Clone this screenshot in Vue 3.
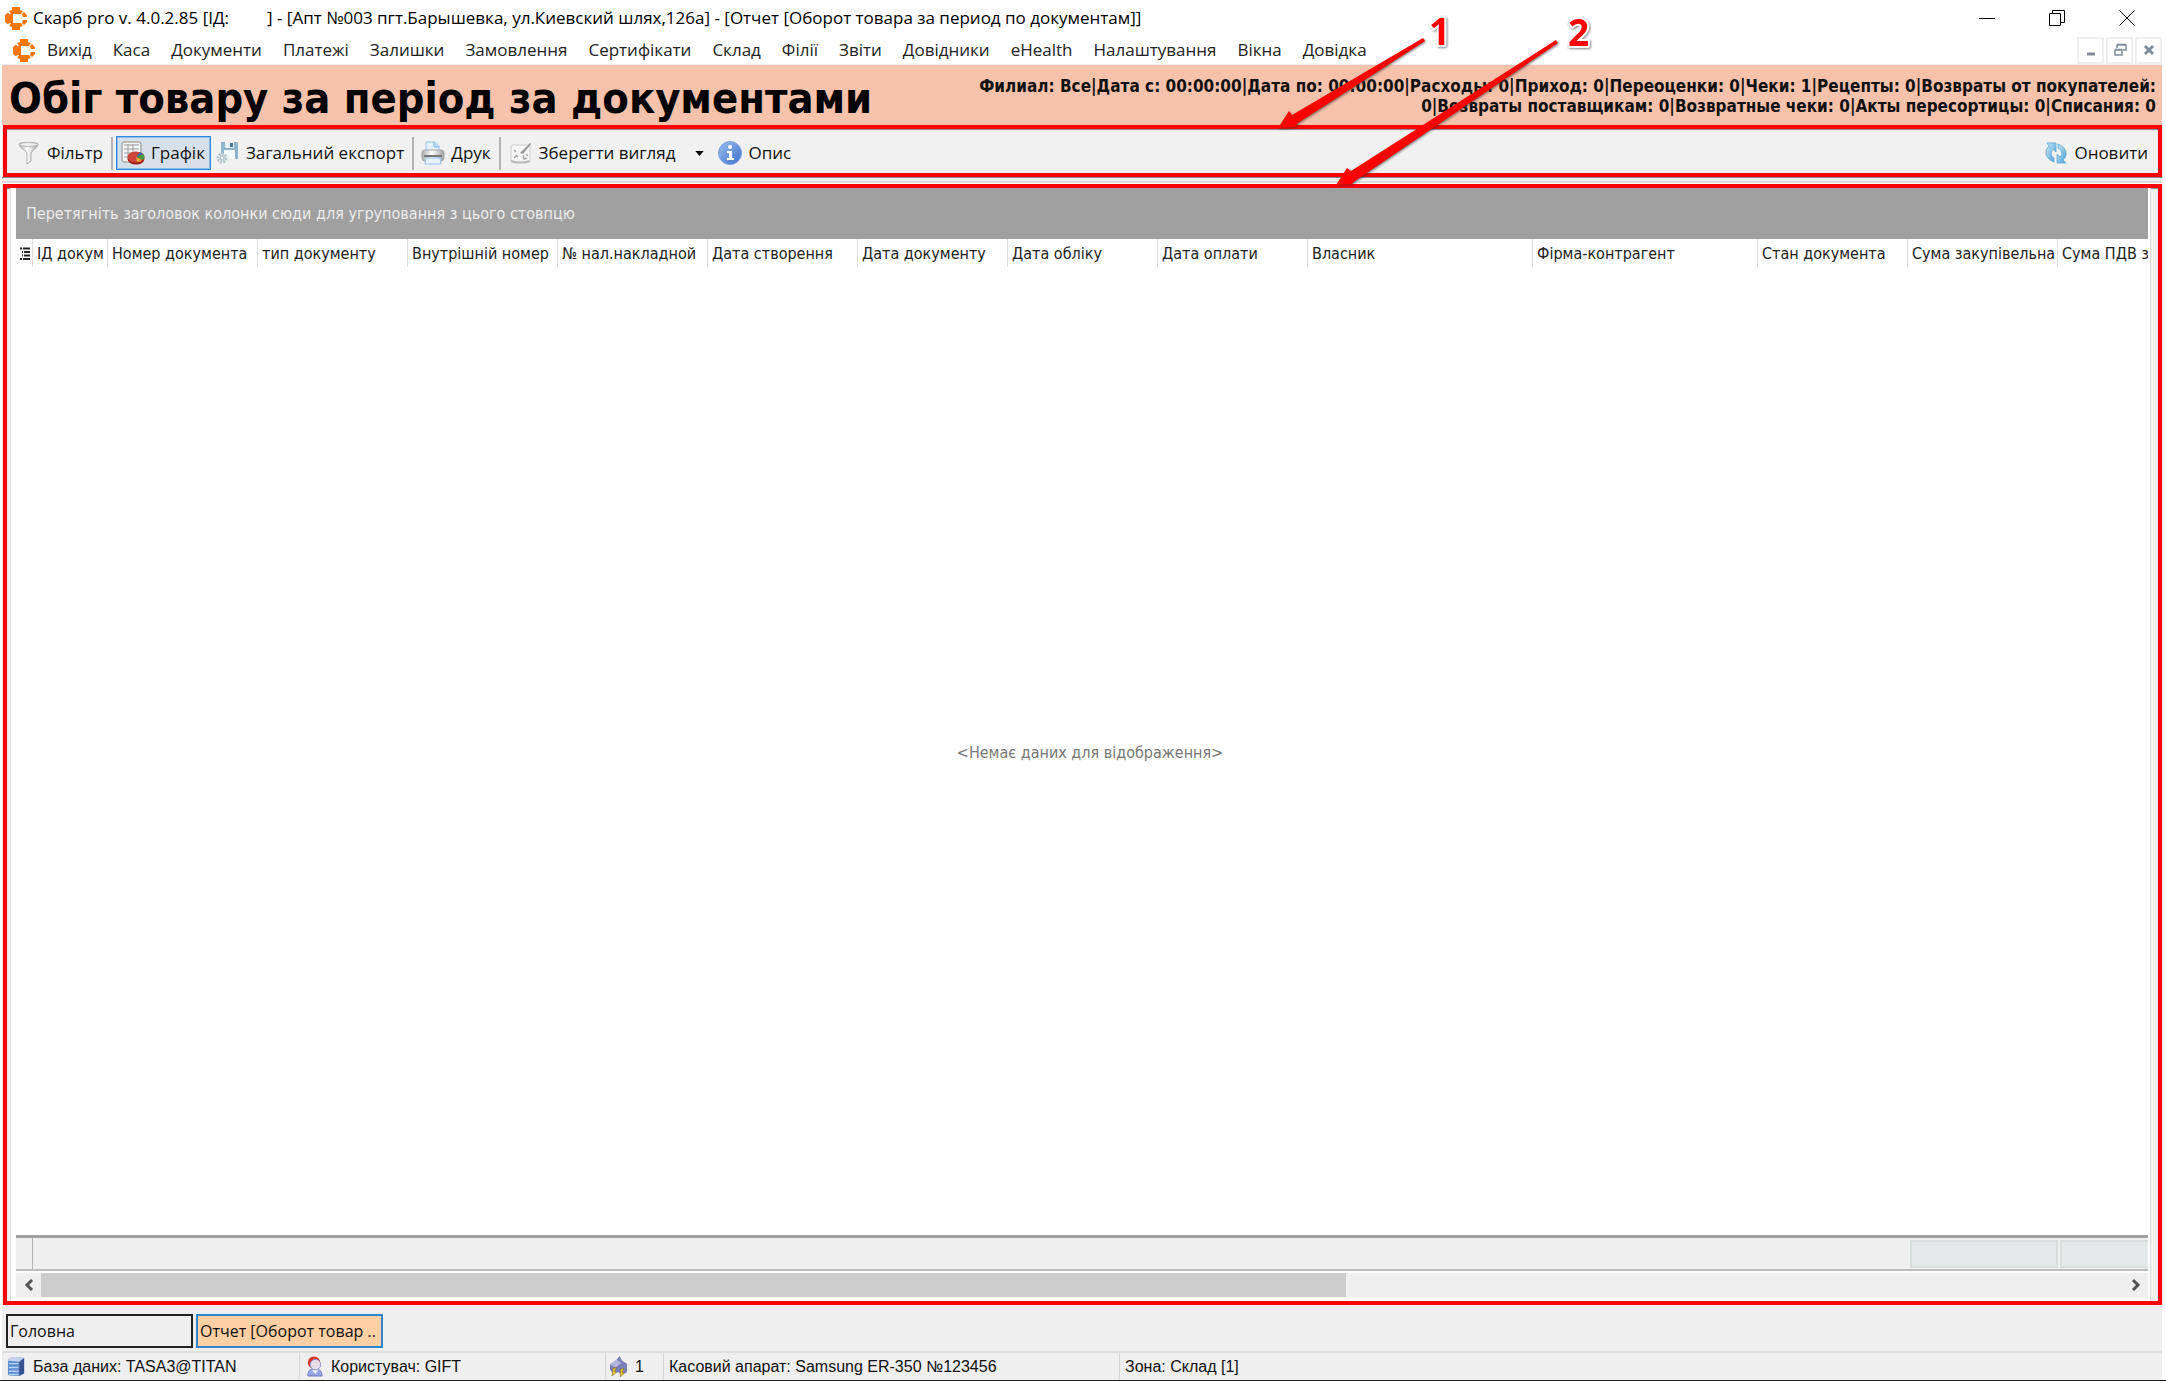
<script setup>
const menu = ['Вихід', 'Каса', 'Документи', 'Платежі', 'Залишки', 'Замовлення', 'Сертифікати', 'Склад', 'Філії', 'Звіти', 'Довідники', 'eHealth', 'Налаштування', 'Вікна', 'Довідка']
const columns = [
  { label: 'ІД докум', width: 75 },
  { label: 'Номер документа', width: 150 },
  { label: 'тип документу', width: 150 },
  { label: 'Внутрішній номер', width: 150 },
  { label: '№ нал.накладной', width: 150 },
  { label: 'Дата створення', width: 150 },
  { label: 'Дата документу', width: 150 },
  { label: 'Дата обліку', width: 150 },
  { label: 'Дата оплати', width: 150 },
  { label: 'Власник', width: 225 },
  { label: 'Фірма-контрагент', width: 225 },
  { label: 'Стан документа', width: 150 },
  { label: 'Сума закупівельна', width: 150, total: true },
  { label: 'Сума ПДВ з', total: true },
]
const summary = 'Филиал: Все|Дата с: 00:00:00|Дата по: 00:00:00|Расходы: 0|Приход: 0|Переоценки: 0|Чеки: 1|Рецепты: 0|Возвраты от покупателей: 0|Возвраты поставщикам: 0|Возвратные чеки: 0|Акты пересортицы: 0|Списания: 0'
const visibleShare = 62.7
</script>

<template>
  <div class="app">
    <svg class="defs" aria-hidden="true">
      <defs>
        <symbol id="logo" viewBox="0 0 22 25">
          <path d="M7 1h8v3l3 1-2 3H6L4 5l3-1zM7 24h8v-3l3-1-2-3H6l-2 3 3 1z" fill="#ff7800" />
          <path d="M3 6.500 5.500 9v7L3 18.500 0 16V9zM19 6l3 3v2h-4l-1-3zM19 19l3-3v-2h-4l-1 3z" fill="#ff7800" />
          <path d="M4 8h4v9H4z" fill="#ff7800" />
        </symbol>
        <linearGradient id="steel" x1="0" x2="1"><stop offset="0" stop-color="#a9adb0" /><stop offset=".45" stop-color="#fff" /><stop offset="1" stop-color="#a0a3a6" /></linearGradient>
        <linearGradient id="blue" x1="0" x2="1" y2="1"><stop offset="0" stop-color="#9cc0f3" /><stop offset="1" stop-color="#3d6fc9" /></linearGradient>
        <linearGradient id="sky" x1="0" x2="1" y2="1"><stop offset="0" stop-color="#c4e6f8" /><stop offset="1" stop-color="#4ba3d6" /></linearGradient>
        <filter id="drop" x="-10%" y="-10%" width="120%" height="120%" color-interpolation-filters="sRGB"><feDropShadow dx="1" dy="1" stdDeviation="1" flood-color="#333" flood-opacity=".6" /></filter>
      </defs>
    </svg>

    <header class="titlebar">
      <svg class="logo"><use href="#logo" /></svg>
      <span class="apptitle">Скарб pro v. 4.0.2.85 [ІД:</span>
      <span>] - [Апт №003 пгт.Барышевка, ул.Киевский шлях,126а] - [Отчет [Оборот товара за период по документам]]</span>
      <div class="wincontrols">
        <button aria-label="Згорнути"><svg viewBox="0 0 16 16"><path d="M0 8.500h16" /></svg></button>
        <button aria-label="Відновити"><svg viewBox="0 0 16 16"><path d="M.5 3.500h11v12H.5zM3.500 3.500v-3h12v12h-4" /></svg></button>
        <button aria-label="Закрити"><svg viewBox="0 0 16 16"><path d="m.5.5 15 15m0-15-15 15" /></svg></button>
      </div>
    </header>

    <nav class="menubar">
      <svg class="logo"><use href="#logo" /></svg>
      <a v-for="m in menu" :key="m" href="#">{{ m }}</a>
      <div class="mdi">
        <button aria-label="Згорнути вікно"><svg viewBox="0 0 14 14"><path d="M3 11h8" stroke-width="3" /></svg></button>
        <button aria-label="Відновити вікно"><svg viewBox="0 0 14 14"><path d="M4 5V2h9v5h-3M4 1.500h9M2 7h7v5H2zM2 6.500h7" stroke-width="1.500" /></svg></button>
        <button aria-label="Закрити вікно"><svg viewBox="0 0 14 14"><path d="m3 3 8 8m0-8-8 8" stroke-width="3" /></svg></button>
      </div>
    </nav>

    <section class="banner">
      <h1>Обіг товару за період за документами</h1>
      <p>{{ summary }}</p>
    </section>

    <div class="toolbar marked">
      <button class="filter">
        <svg viewBox="0 0 24 24"><path d="M2 3c0-2 19-2 19 0 0 3-6 7-7 9v8l-4 3V12C8 9 2 6 2 3z" fill="url(#steel)" stroke="#aaa" /><ellipse cx="11.500" cy="3.500" rx="9" ry="2" fill="#eee" stroke="#b5b5b5" /></svg>
        Фільтр
      </button>
      <i class="sep"></i>
      <button class="chart active">
        <svg viewBox="0 0 24 24"><rect x="1" y="1" width="19" height="20" rx="2" fill="#f4f4f4" stroke="#8c8c8c" /><path d="M3 4h15M3 8h15M3 12h15M3 16h8M7 3v15M12 3v12" stroke="#9d9d9d" /><ellipse cx="15" cy="18" rx="8.500" ry="5.500" fill="#9c1f19" /><ellipse cx="15" cy="16" rx="8.500" ry="5.500" fill="#d1443b" /><path d="m15 16 7-3c2 2 2 4 0 6z" fill="#4a9b3c" /><path d="m15 16 6 3c-2 2-4 2-5 2z" fill="#e9a02c" /><path d="m15 16 4-5 3 2z" fill="#3d6dad" /></svg>
        Графік
      </button>
      <button class="export">
        <svg viewBox="0 0 24 24"><path d="M5 1h17v17H5z" fill="#8fb3cb" /><path d="M9 1h9v6H9z" fill="#e6eff5" /><path d="M14 2h3v4h-3z" fill="#4d7897" /><path d="M8 9h11v9H8z" fill="#f3f8fa" /><circle cx="6" cy="17" r="4" fill="#e8eef0" stroke="#b5c5cc" stroke-width="3" stroke-dasharray="2 1" /><circle cx="6" cy="17" r="2" fill="#f1f1f1" stroke="#a5b9c2" /></svg>
        Загальний експорт
      </button>
      <i class="sep"></i>
      <button class="print">
        <svg viewBox="0 0 24 24"><path d="M5 11V1h9l4 4v6z" fill="#e6f3ff" stroke="#94c2ee" /><path d="M13 1v5h5" fill="#b9daf8" stroke="#7fb5e8" /><rect x="1" y="9" width="22" height="11" rx="3" fill="url(#steel)" stroke="#a2a2a2" /><path d="M3 15h18" stroke="#777" stroke-width="2" /><path d="M5 17h14l1 6H4z" fill="#e8f4ff" stroke="#94c2ee" /></svg>
        Друк
      </button>
      <i class="sep"></i>
      <button class="save">
        <svg viewBox="0 0 24 24"><rect x="2" y="4" width="19" height="17" rx="2" fill="#f7f7f7" stroke="#d0d0d0" /><path d="M2 20c5 2 14 2 19 0" stroke="#bbb" stroke-width="2" fill="none" /><path d="m5 9 2 2m0 3 2 2m-4 1 3-3m6 0 1 4 3-1m-1-4 2 2" stroke="#aaa" stroke-width="1.500" fill="none" /><path d="m11 12 10-10 1 1-8 10z" fill="#999" /></svg>
        Зберегти вигляд
      </button>
      <button class="caret" aria-label="Варіанти вигляду"><svg viewBox="0 0 10 6"><path d="M0 0h10L5 6z" /></svg></button>
      <button class="about">
        <svg viewBox="0 0 24 24"><circle cx="12" cy="12" r="11.500" fill="url(#blue)" stroke="#7fa3de" /><circle cx="12" cy="6" r="2" fill="#fff" /><path d="M9 10h5v7h2v2H9v-2h2v-5H9z" fill="#fff" /></svg>
        Опис
      </button>
      <button class="refresh">
        <svg viewBox="0 0 24 24"><path d="M3 2h9v9L9 8c-3 3-2 7 1 9v4C2 18-1 10 5 5z" fill="url(#sky)" stroke="#5fa9d3" stroke-width=".8" /><path d="M22 22h-9v-9l3 3c3-3 2-7-2-9V3c8 3 11 11 5 16z" fill="url(#sky)" stroke="#5fa9d3" stroke-width=".8" /></svg>
        Оновити
      </button>
    </div>

    <div class="rim"></div>

    <main class="report marked">
      <div class="grid">
        <div class="grouping">Перетягніть заголовок колонки сюди для угруповання з цього стовпцю</div>
        <table class="head">
          <colgroup><col class="marker"><col v-for="c in columns" :key="c.label" :style="c.width ? { width: c.width + 'px' } : null"></colgroup>
          <thead>
            <tr>
              <th><svg class="rows" viewBox="0 0 10 14"><path d="M0 1.500h2M3 1.500h7M2 5h1M4 5h6M2 8.500h1M4 8.500h6M0 12h2M3 12h7" /></svg></th>
              <th v-for="c in columns" :key="c.label"><span>{{ c.label }}</span></th>
            </tr>
          </thead>
        </table>
        <div class="empty">&lt;Немає даних для відображення&gt;</div>
        <table class="totals">
          <colgroup><col class="marker"><col v-for="c in columns" :key="c.label" :style="c.width ? { width: c.width + 'px' } : null"></colgroup>
          <tbody>
            <tr><td></td><td v-for="c in columns" :key="c.label"><div v-if="c.total" class="total"></div></td></tr>
          </tbody>
        </table>
        <div class="scroll">
          <button aria-label="Ліворуч"><svg viewBox="0 0 10 12"><path d="M8 1 3 6l5 5" /></svg></button>
          <div class="track"><div class="thumb" :style="{ width: visibleShare + '%' }"></div></div>
          <button aria-label="Праворуч"><svg viewBox="0 0 10 12"><path d="m2 1 5 5-5 5" /></svg></button>
        </div>
      </div>
    </main>

    <div class="tabs">
      <button>Головна</button>
      <button class="current">Отчет [Оборот товар ..</button>
    </div>

    <footer class="status">
      <div class="db"><svg viewBox="0 0 20 22"><path d="M1 5c0-2 3-4 8-4l9 1v16c-3 2-6 3-9 3s-8 0-8-2z" fill="#5d8ad0" /><path d="M1 5c0-2 3-4 8-4l9 1-5 4z" fill="#c3d4ec" /><path d="m13 6 5-4v16l-5 3z" fill="#34528e" /><path d="M2 8h10M2 12h10M2 16h10M2 19.500h10" stroke="#b4d3f7" stroke-width="1.500" /></svg>База даних: TASA3@TITAN</div>
      <div class="user"><svg viewBox="0 0 20 22"><path d="M3 21c0-6 3-8 7-8s8 2 8 8z" fill="#97a5e2" stroke="#6a79c4" /><circle cx="9.500" cy="7" r="6.500" fill="#d6352b" /><circle cx="11" cy="9" r="5.500" fill="#e6dcea" stroke="#8f95cf" /><path d="m7 15 4 4 3-4z" fill="#eef0ff" /></svg>Користувач: GIFT</div>
      <div class="count"><svg viewBox="0 0 20 22"><path d="m1 9 7-5 3-4 3 5 5 3v9l-6 3-3-3-6 1-3-4z" fill="#7a80b8" /><path d="m1 9 7-5 5 3-6 5z" fill="#b4b9dd" /><path d="m4 13 4-1-2 4 2 1-5 4 1-4zM12 14l4-1-2 4 2 1-4 4v-4z" fill="#eac52c" stroke="#82651a" stroke-width=".6" /></svg>1</div>
      <div class="till">Касовий апарат: Samsung ER-350 №123456</div>
      <div class="zone">Зона: Склад [1]</div>
    </footer>

    <svg class="callouts" width="1620" height="200" viewBox="0 0 1620 200" aria-hidden="true">
      <g fill="#f00" filter="url(#drop)">
        <path d="m1423 38 2 3-127 82-3 4-17 1 11-17 3 4z" />
        <path d="m1556 40 2 3-203 138-3 3-16 1 11-17 4 3z" />
      </g>
      <g class="digits" filter="url(#drop)">
        <text x="1429" y="45">1</text>
        <text x="1568" y="46">2</text>
      </g>
    </svg>
  </div>
</template>

<style>
body { margin: 0; }
</style>

<style scoped>
.app {
  position: relative;
  display: flex;
  flex-direction: column;
  min-height: 100vh;
  box-sizing: border-box;
  padding-right: 4px;
  border-bottom: 1px solid #1c1c1c;
  background: #fff;
  color: #111;
  font: 17px/24px "Open Sans", "Noto Sans", sans-serif;
  overflow: hidden;
}
.defs { position: absolute; width: 0; height: 0; }
button { border: 0; padding: 0; background: none; font: inherit; color: inherit; }
svg { flex: none; }
.logo { width: 22px; height: 25px; }

.titlebar { display: flex; align-items: center; height: 36px; padding-left: 5px; color: #000; white-space: pre; }
.apptitle { width: 234px; margin-left: 6px; }
.wincontrols { display: flex; margin-left: auto; }
.wincontrols button { display: flex; justify-content: center; align-items: center; width: 70px; height: 32px; }
.wincontrols svg { width: 16px; height: 16px; fill: none; stroke: #000; }

.menubar { display: flex; align-items: center; gap: 21px; height: 28px; padding-left: 13px; border-bottom: 1px solid #ececec; }
.menubar .logo { margin-right: -9px; }
.menubar a { color: #222; text-decoration: none; }
.mdi { display: flex; gap: 2px; margin-left: auto; }
.mdi button { display: flex; justify-content: center; align-items: center; box-sizing: border-box; width: 27px; height: 27px; border: 2px solid #efefef; }
.mdi svg { width: 14px; height: 14px; fill: none; stroke: #7f8c99; }

.banner { display: flex; justify-content: space-between; align-items: center; height: 54px; margin-left: 2px; padding: 6px 6px 0 7px; background: #f6c2ab; font-family: "DejaVu Sans Condensed", "DejaVu Sans", sans-serif; font-stretch: condensed; font-weight: bold; }
h1 { margin: 0; font-size: 43px; line-height: 54px; color: #000; white-space: nowrap; }
.banner p { width: 1190px; margin: 0 0 4px; font-size: 17px; line-height: 20px; text-align: right; }

.marked { border: 4px solid #f00; box-shadow: 0 1px 1px #666, inset 0 1px 1px #888; }
.toolbar { display: flex; align-items: center; height: 40px; margin-left: 3px; padding: 4px 10px 0 10px; background: #f1f1f1; }
.toolbar button { display: flex; align-items: center; gap: 6px; height: 34px; white-space: nowrap; }
.toolbar button svg { width: 24px; height: 24px; }
.toolbar .active { box-sizing: border-box; padding: 0 5px 0 4px; border: 1px solid #2b8ade; outline: 1px solid #8cbdea; outline-offset: -2px; background: #d5e0ea; }
.sep { width: 2px; height: 33px; margin: 0 3px 0 8px; background: #b3b3b3; }
.toolbar .export { margin-left: 5px; }
.toolbar .print { margin-left: 4px; }
.toolbar .save { margin-left: 5px; }
.toolbar .caret { margin: 0 14px 0 20px; }
.toolbar .caret svg { width: 9px; height: 5px; }
.toolbar .refresh { margin-left: auto; }

.rim { height: 3px; margin-left: 2px; border-top: 1px solid #888; border-bottom: 2px solid #dcdcdc; background: #f0f0f0; }
.report { display: flex; flex: 1; margin: 1px 0 0 3px; padding: 0 7px 0 3px; background: #f0f0f0; }
.grid { display: flex; flex: 1; flex-direction: column; min-width: 0; padding: 0 2px 4px 5px; border: solid #dcdcdc; border-width: 0 1px; background: #fff; font: 16px/24px "DejaVu Sans Condensed", "DejaVu Sans", sans-serif; font-stretch: condensed; }
.grouping { padding: 14px 10px 13px; background: #a0a0a0; color: #ececec; }
table { width: 100%; border-collapse: separate; border-spacing: 0; table-layout: fixed; }
.marker { width: 17px; }
th { height: 28px; padding: 2px 0 0 4px; border-right: 1px solid #dedede; box-sizing: border-box; font-weight: normal; text-align: left; color: #222; }
th:last-child { border-right: 0; }
th span { display: block; overflow: hidden; white-space: nowrap; }
.rows { display: block; width: 10px; height: 14px; fill: none; stroke: #222; stroke-width: 2; }
.empty { display: flex; flex: 1; justify-content: center; align-items: center; padding: 4px 0 0 16px; color: #777; }
.totals { border: solid #9fa1a3; border-width: 3px 0 0; border-bottom: 2px solid #bdbdbd; background: #efefef; }
.totals td { height: 31px; padding: 1px 0 1px 2px; box-sizing: border-box; }
.totals td:first-child { border-right: 1px solid #b3b3b3; }
.total { height: 28px; border: 2px solid #d9dddb; box-sizing: border-box; background: #e5e9ea; }
.totals td:last-child .total { border-right: 0; }
.scroll { display: flex; height: 24px; margin-top: 2px; background: #efefef; }
.scroll button { display: flex; justify-content: center; align-items: center; width: 25px; }
.scroll svg { width: 10px; height: 12px; fill: none; stroke: #555; stroke-width: 3; }
.track { display: flex; flex: 1; }
.thumb { background: #cdcdcd; }

.tabs { display: flex; gap: 3px; height: 34px; padding: 9px 4px 3px; margin-left: 2px; background: #efefef; font-size: 16px; }
.tabs button { width: 187px; padding: 0 2px; border: 2px solid #222; text-align: left; white-space: nowrap; overflow: hidden; }
.tabs .current { border-color: #2f86cf; background: #ffd0a3; }

.status { display: flex; height: 29px; box-sizing: border-box; margin-left: 2px; border-top: 2px solid #dedede; background: #efefef; font: 16px/27px "Liberation Sans", Arial, sans-serif; color: #111; }
.status div { display: flex; align-items: center; gap: 7px; box-sizing: border-box; padding-left: 5px; border-right: 1px solid #d5d5d5; white-space: nowrap; }
.status svg { width: 19px; height: 21px; }
.status .db { width: 298px; }
.status .user { width: 306px; }
.status .count { width: 58px; padding-left: 3px; }
.status .till { width: 456px; }
.status .zone { border: 0; }

.callouts { position: absolute; top: 0; left: 0; pointer-events: none; }
.digits { font: bold 37px "Open Sans", "Noto Sans", sans-serif; fill: #f00; stroke: #fff; stroke-width: 4px; stroke-linejoin: round; paint-order: stroke; }
</style>
